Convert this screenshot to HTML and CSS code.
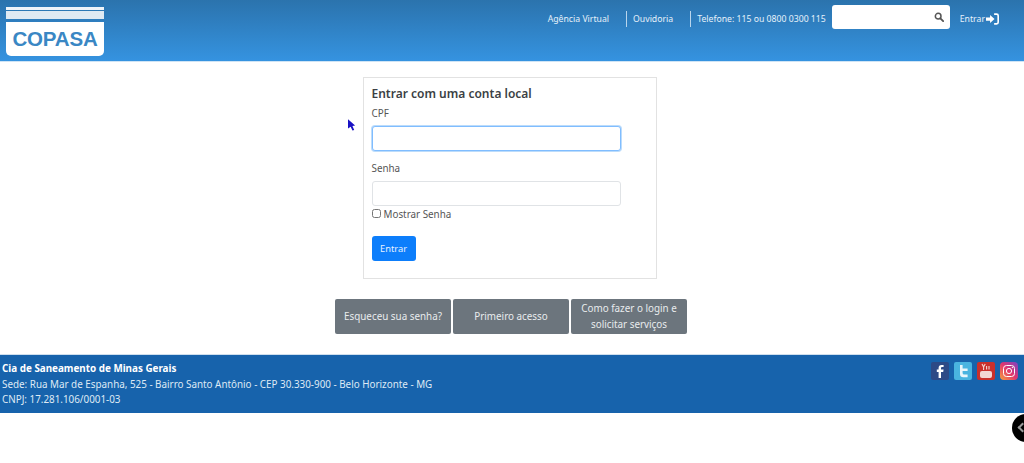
FILE: index.html
```html
<!DOCTYPE html>
<html lang="pt-BR">
<head>
    <meta charset="UTF-8">
    <title>COPASA - Entrar</title>
    <link rel="stylesheet" href="styles.css">
</head>
<body>

    <header class="topbar">
        <a class="logo" href="#">
            <span class="logo-stripe"></span>
            <span class="logo-stripe wide"></span>
            <span class="logo-box">COPASA</span>
        </a>
        <nav class="topnav">
            <a class="topnav-link" href="#">Agência Virtual</a>
            <a class="topnav-link divided" href="#">Ouvidoria</a>
            <span class="topnav-link divided">Telefone: 115 ou 0800 0300 115</span>
            <div class="search">
                <svg viewBox="0 0 12 12" width="10" height="10">
                    <circle cx="5" cy="5" r="3.4" fill="none" stroke="#555" stroke-width="1.8"/>
                    <path d="M7.6 7.6 L11 11" stroke="#555" stroke-width="2.2" stroke-linecap="round"/>
                </svg>
            </div>
            <a class="login-link" href="#">
                Entrar
                <svg viewBox="0 0 16 14" width="13" height="12">
                    <path d="M0 5 H5 V2 L10.5 7 L5 12 V9 H0 Z" fill="#fff"/>
                    <path d="M10 1 H13 Q15 1 15 3 V11 Q15 13 13 13 H10" fill="none" stroke="#fff" stroke-width="2"/>
                </svg>
            </a>
        </nav>
    </header>

    <main class="content">
        <form class="card">
            <h4>Entrar com uma conta local</h4>
            <label class="field-label">CPF</label>
            <input class="field focused" type="text">
            <label class="field-label second">Senha</label>
            <input class="field" type="text">
            <label class="show-pass"><input type="checkbox"> Mostrar Senha</label>
            <button class="btn-primary" type="button">Entrar</button>
        </form>

        <div class="actions">
            <a class="btn-grey" href="#">Esqueceu sua senha?</a>
            <a class="btn-grey" href="#">Primeiro acesso</a>
            <a class="btn-grey" href="#">Como fazer o login e solicitar serviços</a>
        </div>
    </main>

    <footer class="footer">
        <div class="footer-text">
            <strong>Cia de Saneamento de Minas Gerais</strong><br>
            Sede: Rua Mar de Espanha, 525 - Bairro Santo Antônio - CEP 30.330-900 - Belo Horizonte - MG<br>
            CNPJ: 17.281.106/0001-03
        </div>
        <div class="social">
            <svg class="icon" viewBox="0 0 18 18">
                <rect width="18" height="18" rx="2" fill="#2d4a86"/>
                <path d="M10 16 V10 H12.2 L12.6 7.6 H10 V6 Q10 5 11 5 H12.6 V3 H10.6 Q7.6 3 7.6 6 V7.6 H5.8 V10 H7.6 V16 Z" fill="#fff"/>
            </svg>
            <svg class="icon" viewBox="0 0 18 18">
                <rect width="18" height="18" rx="2" fill="#49b4e0"/>
                <path d="M6 3 H8.6 V6.4 H13.6 V9 H8.6 V11 Q8.6 12.6 10.2 12.6 H13.6 V15.2 H9.4 Q6 15.2 6 12 Z" fill="#e8f6fb"/>
            </svg>
            <svg class="icon" viewBox="0 0 18 18">
                <rect width="18" height="18" rx="2" fill="#c9302c"/>
                <rect x="3" y="9" width="12" height="7" rx="2" fill="#f3d6d4"/>
                <path d="M5 2 L6.6 5 V8 M8.2 2 L6.6 5 M9.6 4 V7.6 M12 4 V7.6" stroke="#f3d6d4" stroke-width="1.1" fill="none"/>
            </svg>
            <svg class="icon" viewBox="0 0 18 18">
                <defs>
                    <linearGradient id="insta" x1="0" y1="1" x2="1" y2="0">
                        <stop offset="0" stop-color="#f9a13a"/>
                        <stop offset="0.5" stop-color="#e0366f"/>
                        <stop offset="1" stop-color="#7a45c6"/>
                    </linearGradient>
                </defs>
                <rect width="18" height="18" rx="4" fill="url(#insta)"/>
                <rect x="3.5" y="3.5" width="11" height="11" rx="3" fill="none" stroke="#fff" stroke-width="1"/>
                <circle cx="9" cy="9" r="2.6" fill="none" stroke="#fff" stroke-width="1"/>
                <circle cx="12.4" cy="5.6" r="0.7" fill="#fff"/>
            </svg>
        </div>
    </footer>

    <!-- ponteiro do mouse e botao flutuante por cima da pagina -->
    <svg class="cursor" viewBox="0 0 9 13" width="8" height="12">
        <path d="M0 0 L8 7 L5 7.6 L7 12 L5 12.6 L3 8.4 L0 10.4 Z" fill="#1a12c4"/>
    </svg>
    <div class="float-btn"><span class="float-arrow"></span></div>

</body>
</html>
```

FILE: styles.css
```css
* {
    box-sizing: border-box;
}

body {
    margin: 0;
    height: 463px;
    overflow: hidden;
    background-color: #fff;
    font-family: "Noto Sans", "Open Sans", sans-serif;
    font-size: 9.85px;
    color: #555;
}

a {
    text-decoration: none;
}

/* Cabecalho */
.topbar {
    display: flex;
    justify-content: space-between;
    height: 62px;
    padding: 7px 0 0 6px;
    background: linear-gradient(#2b73ad, #3593e0);
    border-bottom: 1px solid #cfe4f5;
}

.logo {
    display: flex;
    flex-direction: column;
    width: 98px;
    height: 49px;
}

.logo-stripe {
    height: 3px;
    margin-bottom: 1px;
    background-color: #eef4f9;
}

.logo-stripe.wide {
    height: 8px;
    margin-bottom: 3px;
    background-color: #dfeaf3;
}

.logo-box {
    flex: 1;
    display: flex;
    align-items: center;
    justify-content: center;
    background-color: #fff;
    border-radius: 0 0 5px 5px;
    color: #3a87c4;
    font-family: "Liberation Sans", Arial, sans-serif;
    font-size: 20.5px;
    font-weight: bold;
    letter-spacing: -0.2px;
}

.topnav {
    display: flex;
    align-items: flex-start;
    padding-right: 25px;
    color: #e6f1fa;
    font-size: 8.7px;
}

.topnav-link {
    display: flex;
    align-items: center;
    height: 16px;
    margin-top: 4px;
    padding: 0 6px 0 0;
    color: #e6f1fa;
    white-space: nowrap;
}

.topnav-link.divided {
    margin-left: 11px;
    padding-left: 6px;
    border-left: 1px solid #b9d5ec;
}

.search {
    display: flex;
    align-items: center;
    justify-content: flex-end;
    width: 118px;
    height: 24px;
    margin: -2px 0 0 0;
    padding-right: 6px;
    background-color: #fff;
    border-radius: 3px;
}

.login-link {
    display: flex;
    align-items: center;
    gap: 1px;
    height: 16px;
    margin: 4px 0 0 10px;
    color: #e6f1fa;
}

/* Formulario */
.content {
    display: flex;
    flex-direction: column;
    align-items: center;
    height: 292px;
    padding-top: 15px;
}

.card {
    display: flex;
    flex-direction: column;
    align-items: flex-start;
    width: 294px;
    height: 202px;
    margin-right: 5px;
    padding: 7px 8px 0;
    border: 1px solid #e2e2e2;
}

.card h4 {
    margin: 0 0 4px;
    font-size: 12px;
    line-height: 17px;
    font-weight: 600;
    color: #3b3f44;
}

.field-label {
    line-height: 15px;
    margin-bottom: 5px;
}

.field-label.second {
    margin-top: 10px;
}

.field {
    width: 249px;
    height: 25px;
    padding: 0 8px;
    border: 1px solid #e0e3e6;
    border-radius: 3px;
    outline: none;
    background-color: #fff;
}

.field.focused {
    border-color: #80bdff;
    box-shadow: 0 0 0 1px #bcdcfb;
}

.show-pass {
    display: flex;
    align-items: center;
    gap: 3px;
    height: 15px;
}

.show-pass input {
    width: 9px;
    height: 9px;
    margin: 0;
}

.btn-primary {
    width: 44px;
    height: 25px;
    margin-top: 15px;
    padding: 0;
    border: none;
    border-radius: 3px;
    background-color: #0d7efb;
    color: #e6f1ff;
    font-family: inherit;
    font-size: 9.3px;
}

.actions {
    display: flex;
    gap: 2px;
    margin-top: 20px;
    margin-right: 2px;
}

.btn-grey {
    display: flex;
    align-items: center;
    justify-content: center;
    width: 116px;
    height: 35px;
    padding: 0 6px;
    border-radius: 2px;
    background-color: #6c757d;
    color: #e9ecee;
    line-height: 15.5px;
    text-align: center;
}

/* Rodape */
.footer {
    display: flex;
    justify-content: space-between;
    height: 59px;
    padding: 6px 6px 0 2px;
    background-color: #1763ac;
    border-top: 1px solid #cfdfee;
    color: #dfeaf5;
    line-height: 15.5px;
}

.footer-text strong {
    color: #fff;
}

.social {
    display: flex;
    gap: 5px;
    padding-top: 1px;
}

.icon {
    width: 18px;
    height: 18px;
}

/* Sobre o conteudo */
.cursor {
    position: absolute;
    left: 348px;
    top: 119px;
}

.float-btn {
    position: absolute;
    left: 1012px;
    top: 414px;
    width: 28px;
    height: 28px;
    border-radius: 50%;
    background-color: #000;
}

.float-arrow {
    position: absolute;
    left: 7px;
    top: 10px;
    width: 7px;
    height: 7px;
    border-left: 2px solid #999;
    border-bottom: 2px solid #999;
    transform: rotate(45deg);
}
```
